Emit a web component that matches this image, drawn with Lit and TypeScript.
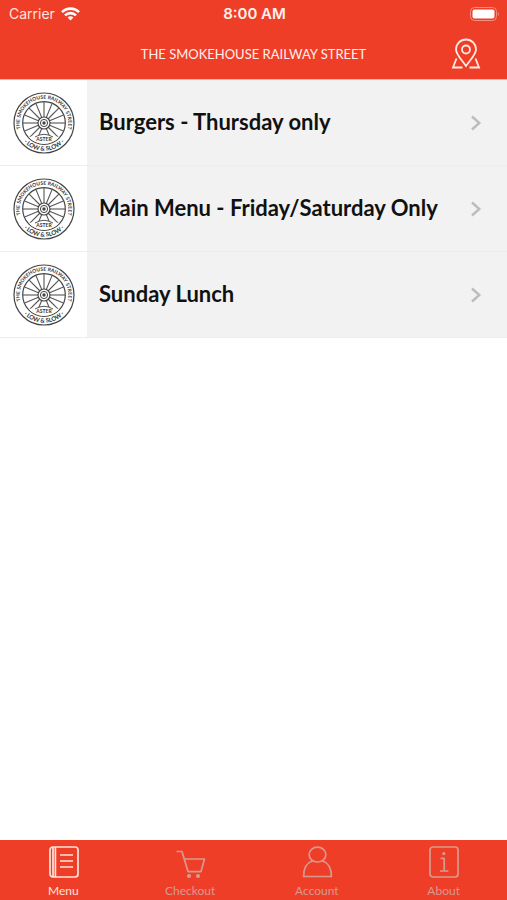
import { LitElement, html, css, svg } from "lit";
import { customElement, property } from "lit/decorators.js";

const spokes = Array.from({ length: 16 }, (_, i) => i * 22.5);

@customElement("wheel-logo")
class WheelLogo extends LitElement {
  static styles = css`
    :host { display: block; width: 62px; height: 62px; }
    svg { display: block; width: 100%; height: 100%; }
    .line { fill: none; stroke: #444; }
    .spoke { stroke: #555; stroke-width: 1.1; }
    text { font-family: Lato, "Liberation Sans", sans-serif; font-weight: 700; fill: #333; text-anchor: middle; }
    .ring { font-size: 5px; }
    .motto { font-size: 6px; }
    .year { font-size: 5px; }
  `;
  render() {
    return html`<svg viewBox="-31 -31 62 62" role="img" aria-label="The Smokehouse Railway Street">
      <defs>
        <path id="top" d="M-17.2 17.2A24.3 24.3 0 1 1 17.2 17.2" />
        <path id="bottom" d="M-27.6 0A27.6 27.6 0 0 0 27.6 0" />
      </defs>
      <circle class="line" r="30" stroke-width="1.2" />
      <circle class="line" r="21.3" stroke-width="1.2" />
      ${spokes
        .filter((a) => a !== 90)
        .map((a) => svg`<line class="spoke" x1="6" x2="21" y1="0" y2="0" transform=${`rotate(${a})`} />`)}
      <circle class="line" r="6" stroke-width="1.2" />
      <circle class="line" r="3.6" stroke-width="1" />
      <circle r="1.7" fill="#444" />
      <path d="M-15.4 14Q0 10.5 15.4 14A20.6 20.6 0 0 1 -15.4 14Z" fill="#fff" />
      <path class="line" d="M-9 14Q0 8.6 9 14" stroke-width="0.9" />
      <text class="ring"><textPath href="#top" startOffset="50%">THE SMOKEHOUSE RAILWAY STREET</textPath></text>
      <text class="motto"><textPath href="#bottom" startOffset="50%">· LOW &amp; SLOW ·</textPath></text>
      <text class="year" y="18">ASTER</text>
    </svg>`;
  }
}

@customElement("menu-row")
class MenuRow extends LitElement {
  @property() label = "";
  static styles = css`
    :host { display: block; }
    .row { display: flex; align-items: stretch; height: 85px; border-bottom: 1px solid #ededed; background: #f2f2f2; color: #111; text-decoration: none; }
    .thumb { display: flex; align-items: center; justify-content: center; width: 87px; flex: none; background: #fff; }
    .name { flex: 1; align-self: center; padding: 0 0 2px 12px; font: 700 22px/28px Lato, "Liberation Sans", sans-serif; }
    .chevron { flex: none; align-self: center; width: 12px; height: 16px; margin-right: 25px; fill: none; stroke: #bcbcbc; stroke-width: 2.4; }
  `;
  render() {
    return html`<a class="row" href="#">
      <span class="thumb"><wheel-logo></wheel-logo></span>
      <span class="name">${this.label}</span>
      <svg class="chevron" viewBox="0 0 12 16" aria-hidden="true"><path d="M2 1.5L9.3 8L2 14.5" /></svg>
    </a>`;
  }
}

const tabs = [
  {
    label: "Menu",
    icon: svg`<rect x="3" y="2" width="28" height="30" rx="3" /><path d="M6 2V32M8.4 2V32M13 10H26M13 16H26M13 22H26" />`,
  },
  {
    label: "Checkout",
    icon: svg`<path d="M2.5 6.5H8L14 26.6H27L30.5 14H10.2" /><circle cx="15" cy="31" r="1.2" fill="currentColor" /><circle cx="24" cy="31" r="1.2" fill="currentColor" />`,
  },
  {
    label: "Account",
    icon: svg`<ellipse cx="16.5" cy="9.6" rx="8.4" ry="7.4" /><path d="M11.5 15.8C5.5 18 2.6 23.4 2.6 31.5H30.4C30.4 23.4 27.5 18 21.5 15.8" />`,
  },
  {
    label: "About",
    icon: svg`<rect x="2" y="2" width="28" height="30" rx="3" /><path d="M12.6 13.4H16.2V26M12 26H20.4" /><circle cx="15.8" cy="8.6" r="0.8" />`,
  },
];

@customElement("app-root")
class AppRoot extends LitElement {
  static styles = css`
    :host { display: flex; flex-direction: column; min-height: 100vh; background: #fff; }
    header { background: #ef3e27; color: #fff; border-bottom: 1px solid #f6b5aa; }
    .status { display: grid; grid-template-columns: 1fr auto 1fr; align-items: center; height: 28px; padding: 0 7px 0 9px; font: 400 14px/20px Inter, "Liberation Sans", sans-serif; color: #ffe3dc; }
    .carrier { display: flex; align-items: center; gap: 6px; }
    .wifi { width: 19px; height: 14px; fill: none; stroke: #fff; stroke-width: 2.6; }
    .time { font-size: 15px; font-weight: 600; color: #fff0ec; }
    .battery { justify-self: end; width: 31px; height: 14px; }
    .bar { display: grid; grid-template-columns: 60px 1fr 60px; align-items: center; height: 51px; padding: 0 11px; }
    h1 { grid-column: 2; margin: 0; text-align: center; font: 400 13px/20px Lato, "Liberation Sans", sans-serif; color: #fff0ec; }
    .map { justify-self: center; display: block; padding: 0; border: 0; background: none; }
    .map svg { display: block; width: 30px; height: 32px; fill: none; stroke: #ffeae5; stroke-width: 1.8; }
    main { flex: 1; }
    nav { display: grid; grid-template-columns: repeat(4, 1fr); height: 60px; background: #ef3e27; }
    .tab { display: flex; flex-direction: column; align-items: center; padding-top: 5px; color: #d89a90; text-decoration: none; font: 400 12px/16px Lato, "Liberation Sans", sans-serif; }
    .tab svg { width: 32px; height: 34px; margin-bottom: 4px; fill: none; stroke: currentColor; stroke-width: 1.7; stroke-linejoin: round; }
    .active { color: #ffe3dc; }
  `;
  render() {
    return html`
      <header>
        <div class="status">
          <span class="carrier">Carrier
            <svg class="wifi" viewBox="0 0 19 14" aria-hidden="true"><path d="M1 5.2A12 12 0 0 1 18 5.2M4 8.4A7.8 7.8 0 0 1 15 8.4" /><path d="M6.6 10.6A4.2 4.2 0 0 1 12.4 10.6L9.5 13.6Z" fill="#fff" stroke="none" /></svg>
          </span>
          <span class="time">8:00 AM</span>
          <svg class="battery" viewBox="0 0 31 14" aria-hidden="true"><rect x="1.5" y="0.5" width="26" height="13" rx="4" fill="none" stroke="#f58f80" /><rect x="3.5" y="2.5" width="22" height="9" rx="2" fill="#fff" /><path d="M29 5Q31 7 29 9Z" fill="#f58f80" /></svg>
        </div>
        <div class="bar">
          <h1>THE SMOKEHOUSE RAILWAY STREET</h1>
          <button class="map" aria-label="Map">
            <svg viewBox="0 0 30 32"><path d="M15 28C11 22 5 16.5 5 11.5A10 10 0 0 1 25 11.5C25 16.5 19 22 15 28Z" /><circle cx="15" cy="11.5" r="4" /><path d="M5.5 20.5L2 29.5H11.5M24.5 20.5L28 29.5H18.5" /></svg>
          </button>
        </div>
      </header>
      <main>
        ${["Burgers - Thursday only", "Main Menu - Friday/Saturday Only", "Sunday Lunch"].map((label) => html`<menu-row label=${label}></menu-row>`)}
      </main>
      <nav>
        ${tabs.map((tab, i) => html`<a class="tab ${i === 0 ? "active" : ""}" href="#"><svg viewBox="0 0 32 34" aria-hidden="true">${tab.icon}</svg>${tab.label}</a>`)}
      </nav>
    `;
  }
}
